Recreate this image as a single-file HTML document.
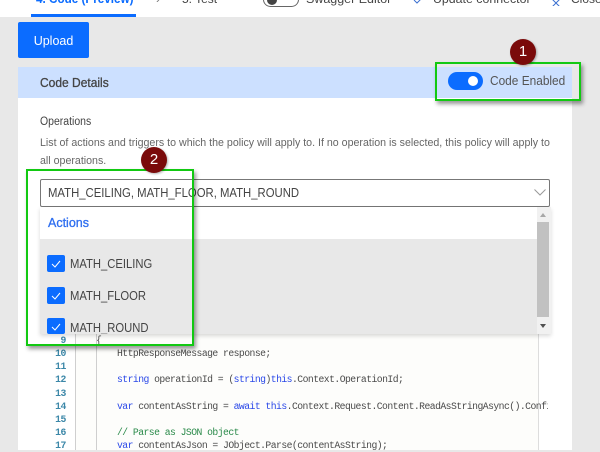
<!DOCTYPE html>
<html><head><meta charset="utf-8">
<style>
html,body{margin:0;padding:0}
body{width:600px;height:450px;overflow:hidden;position:relative;background:#e8e8e8;font-family:"Liberation Sans",sans-serif;color:#444}
.a{position:absolute;white-space:nowrap;transform-origin:0 50%}
.t{font-size:11.5px;line-height:14px;color:#555}
.m{font-family:"Liberation Mono",monospace;font-size:9.75px;letter-spacing:-.55px;line-height:13px;color:#4a4a4a;white-space:pre}
.n{font-family:"Liberation Mono",monospace;font-size:9.75px;letter-spacing:-.4px;line-height:13px;color:#3b87a8;font-weight:bold;width:12px;text-align:right;left:54px}
.k{color:#2a48e8}.c{color:#2a8a4a}
.cb{position:absolute;left:47px;width:18px;height:17px;background:#0b6cff;border-radius:2px}
.cb svg{position:absolute;left:0;top:0}
.o{font-size:12.5px;line-height:16px;color:#444;left:70px;transform:scaleX(.9)}
.g{position:absolute;border:2px solid #12c912;box-shadow:2px 3px 4px rgba(0,0,0,.4);box-sizing:border-box}
.b{position:absolute;width:26px;height:26px;border-radius:50%;background:#7a0a0a;color:#fff;text-align:center;font-size:15px;line-height:26px;box-shadow:1px 1px 2px rgba(0,0,0,.3)}
</style></head><body>
<div class="a" style="left:0;top:0;width:600px;height:17px;background:#fff"></div>
<div class="a" style="left:31px;top:14px;width:105px;height:3px;background:#0b6cff"></div>
<div class="a" style="left:36px;top:-9px;font-size:13px;line-height:16px;color:#0b6cff;font-weight:bold;transform:scaleX(.9)">4. Code (Preview)</div>
<div class="a" style="left:156px;top:-9px;font-size:12px;line-height:16px;color:#777">›</div>
<div class="a" style="left:182px;top:-9px;font-size:12px;line-height:16px;color:#444">5. Test</div>
<div class="a" style="left:263px;top:-8px;width:34px;height:13px;border:1px solid #666;border-radius:8px;background:#fff"></div>
<div class="a" style="left:267px;top:-5px;width:10px;height:10px;border-radius:50%;background:#444"></div>
<div class="a" style="left:306px;top:-9px;font-size:12px;line-height:16px;color:#444;transform:scaleX(1.04)">Swagger Editor</div>
<svg class="a" style="left:412px;top:0" width="12" height="6"><path d="M2 0L5 3L10 -2" fill="none" stroke="#3a6fd0" stroke-width="1"/></svg>
<div class="a" style="left:433px;top:-9px;font-size:12px;line-height:16px;color:#444;transform:scaleX(1.03)">Update connector</div>
<svg class="a" style="left:550px;top:0" width="12" height="6"><path d="M1 -2L6 3L11 -2M6 3L1 8M6 3L11 8" fill="none" stroke="#3a6fd0" stroke-width="1"/></svg>
<div class="a" style="left:571px;top:-9px;font-size:12px;line-height:16px;color:#444">Close</div>

<div class="a" style="left:18px;top:22px;width:71px;height:36px;background:#0b6cff;border-radius:2px;color:#fff;font-size:12.5px;line-height:38px;text-align:center">Upload</div>

<div class="a" style="left:18px;top:97px;width:554px;height:353px;background:#fff"></div>
<div class="a" style="left:18px;top:67px;width:554px;height:31px;background:#cce0ff"></div>
<div class="a" style="left:40px;top:75px;font-size:12.5px;line-height:16px;color:#444;-webkit-text-stroke:.3px #444;transform:scaleX(.96)">Code Details</div>
<div class="a" style="left:448px;top:72px;width:35px;height:18px;border-radius:9px;background:#0b6cff"></div>
<div class="a" style="left:468px;top:76px;width:10px;height:10px;border-radius:50%;background:#fff"></div>
<div class="a" style="left:490px;top:73px;font-size:12.5px;line-height:16px;color:#555;transform:scaleX(.95)">Code Enabled</div>

<div class="a t" style="left:40px;top:115px;font-size:11.5px;color:#444;transform:scaleX(.91)">Operations</div>
<div class="a t" style="left:40px;top:136px;font-size:11.3px;color:#666;transform:scaleX(.942)">List of actions and triggers to which the policy will apply to. If no operation is selected, this policy will apply to</div>
<div class="a t" style="left:40px;top:154px;font-size:11.3px;color:#666;transform:scaleX(.942)">all operations.</div>

<!-- code -->
<div class="a" style="left:76px;top:330px;width:462px;height:120px;background:#fdfdfb"></div>
<div class="a" style="left:75px;top:330px;width:1px;height:120px;background:#cfcfcf"></div>
<div class="a" style="left:96px;top:330px;width:1px;height:120px;background:#cfcfcf"></div>
<div class="a" style="left:538px;top:330px;width:1px;height:120px;background:#ddd"></div>
<div class="a n" style="top:334px">9</div>
<div class="a m" style="left:96px;top:334px">{</div>
<div class="a n" style="top:347px">10</div>
<div class="a m" style="left:117px;top:347px;">HttpResponseMessage response;</div>
<div class="a n" style="top:360px">11</div>
<div class="a n" style="top:373px">12</div>
<div class="a m" style="left:117px;top:373px"><span class="k">string</span> operationId = (<span class="k">string</span>)<span class="k">this</span>.Context.OperationId;</div>
<div class="a n" style="top:387px">13</div>
<div class="a n" style="top:400px">14</div>
<div class="a m" style="left:117px;top:400px;width:431px;overflow:hidden"><span class="k">var</span> contentAsString = <span class="k">await this</span>.Context.Request.Content.ReadAsStringAsync().ConfigureAwait(false);</div>
<div class="a n" style="top:413px">15</div>
<div class="a n" style="top:426px">16</div>
<div class="a m c" style="left:117px;top:426px;color:#2a8a4a">// Parse as JSON object</div>
<div class="a n" style="top:439px">17</div>
<div class="a m" style="left:117px;top:439px"><span class="k">var</span> contentAsJson = JObject.Parse(contentAsString);</div>

<!-- select -->
<div class="a" style="left:40px;top:179px;width:508px;height:26px;border:1px solid #777;border-radius:2px;background:#fff"></div>
<div class="a" style="left:48px;top:185px;font-size:12.5px;line-height:16px;color:#444;transform:scaleX(.906)">MATH_CEILING, MATH_FLOOR, MATH_ROUND</div>
<svg class="a" style="left:533px;top:188px" width="14" height="9"><path d="M1.5 1.5L7 7L12.5 1.5" fill="none" stroke="#999" stroke-width="1"/></svg>

<!-- dropdown -->
<div class="a" style="left:40px;top:207px;width:511px;height:127px;background:#fff;box-shadow:0 2px 4px rgba(0,0,0,.15)"></div>
<div class="a" style="left:40px;top:239px;width:497px;height:95px;background:#e8e8e8"></div>
<div class="a" style="left:48px;top:215px;font-size:12.5px;line-height:16px;color:#2f6ff0;-webkit-text-stroke:.3px #2f6ff0">Actions</div>
<div class="cb" style="top:255px"><svg width="18" height="17"><path d="M5 9L8 12L13 6" fill="none" stroke="#fff" stroke-width="1"/></svg></div>
<div class="a o" style="top:256px">MATH_CEILING</div>
<div class="cb" style="top:287px"><svg width="18" height="17"><path d="M5 9L8 12L13 6" fill="none" stroke="#fff" stroke-width="1"/></svg></div>
<div class="a o" style="top:288px">MATH_FLOOR</div>
<div class="cb" style="top:318px;height:16px"><svg width="18" height="16"><path d="M5 9L8 12L13 6" fill="none" stroke="#fff" stroke-width="1"/></svg></div>
<div class="a o" style="top:320px;height:14px;overflow:hidden">MATH_ROUND</div>
<div class="a" style="left:537px;top:207px;width:14px;height:127px;background:#f1f1f1"></div>
<div class="a" style="left:537px;top:222px;width:12px;height:95px;background:#c1c1c1"></div>
<svg class="a" style="left:538px;top:211px" width="10" height="8"><path d="M2 6H8L5 2Z" fill="#a8a8a8"/></svg>
<svg class="a" style="left:538px;top:322px" width="10" height="8"><path d="M2 2H8L5 6Z" fill="#505050"/></svg>

<!-- annotations -->
<div class="g" style="left:435px;top:62px;width:146px;height:39px"></div>
<div class="g" style="left:26px;top:169px;width:168px;height:177px"></div>
<div class="b" style="left:510px;top:39px">1</div>
<div class="b" style="left:141px;top:147px">2</div>
</body></html>
